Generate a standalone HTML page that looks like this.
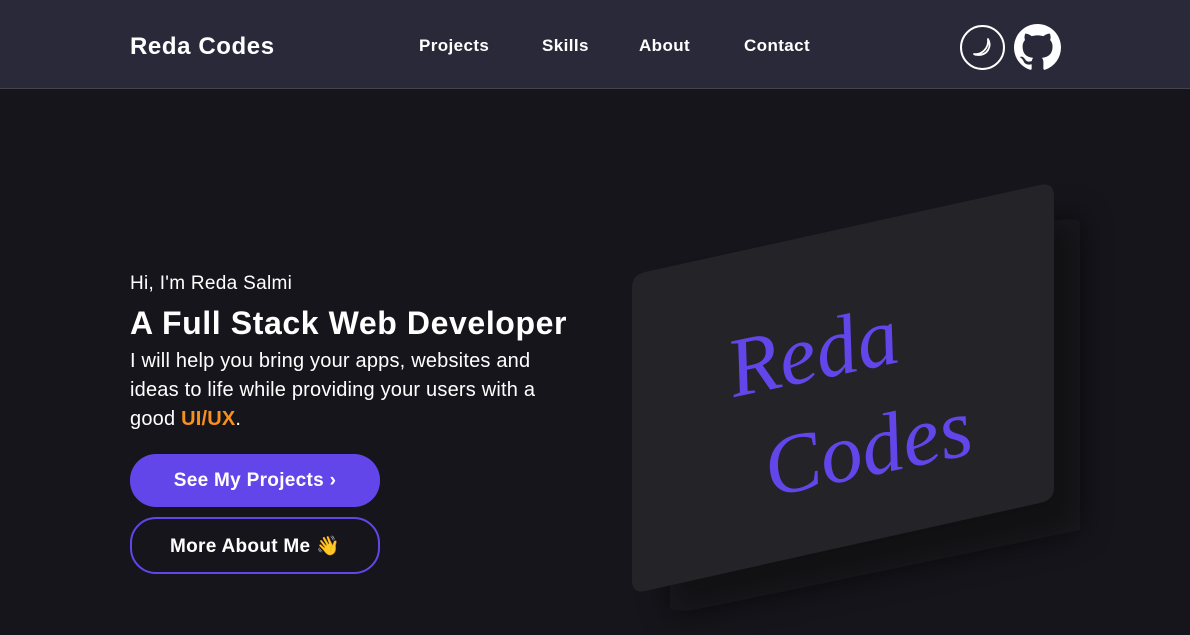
<!DOCTYPE html>
<html><head><style>
*{margin:0;padding:0;box-sizing:border-box}
body{width:1190px;height:635px;overflow:hidden;background:#16151b;font-family:"Liberation Sans",sans-serif;color:#fff;position:relative}
header{position:absolute;left:0;top:0;width:1190px;height:89px;background:#2a2939;border-bottom:1px solid #44434f}
.logo{position:absolute;left:130px;top:33px;font-size:24px;font-weight:bold;letter-spacing:0.6px}
nav a{position:absolute;top:36px;font-size:17px;font-weight:bold;color:#fff;text-decoration:none;letter-spacing:0.4px}
.t{position:absolute;left:130px}
.btn{position:absolute;left:130px;width:250px;border-radius:26px;font-weight:bold;font-size:19px;display:flex;align-items:center;justify-content:center;letter-spacing:0.3px}
</style></head><body>
<header>
<div class="logo">Reda Codes</div>
<nav><a style="left:419px">Projects</a><a style="left:542px">Skills</a><a style="left:639px">About</a><a style="left:744px">Contact</a></nav>
<svg style="position:absolute;left:959px;top:24px" width="47" height="47" viewBox="0 0 47 47"><circle cx="23.5" cy="23.5" r="21.5" fill="none" stroke="#fff" stroke-width="2"/><path d="M29 15 C33 22 29 31 19 31 C16 31 15 30 15 30 C23 31 30 24 29 15Z" fill="none" stroke="#fff" stroke-width="1.8" stroke-linejoin="round"/></svg>
<svg style="position:absolute;left:1014px;top:24px" width="47" height="47" viewBox="0 0 16 16"><path fill="#fff" d="M8 0C3.58 0 0 3.58 0 8c0 3.54 2.29 6.53 5.47 7.590.4.07.55-.17.55-.38 0-.19-.01-.82-.01-1.49-2.01.37-2.53-.49-2.69-.94-.09-.23-.48-.94-.82-1.130-.28-.15-.68-.52-.01-.53.63-.01 1.08.58 1.230.82.72 1.21 1.87.87 2.33.66.07-.52.28-.87.51-1.07-1.78-.2-3.64-.89-3.64-3.95 0-.87.31-1.59.82-2.15-.08-.2-.36-1.02.08-2.12 0 0 .67-.21 2.2.82.64-.18 1.32-.27 2-.27.68 0 1.36.09 2 .27 1.53-1.04 2.2-.82 2.2-.82.44 1.1.16 1.92.08 2.12.51.56.82 1.27.82 2.15 0 3.07-1.87 3.75-3.65 3.95.29.25.54.73.54 1.48 0 1.07-.01 1.930-.01 2.2 0 .21.15.46.55.38A8.013 8.013 0 0016 8c0-4.42-3.58-8-8-8z"/></svg>
</header>
<div class="t" style="top:273px;font-size:19px;letter-spacing:0.3px">Hi, I'm Reda Salmi</div>
<div class="t" style="top:305px;font-size:32px;font-weight:bold;letter-spacing:0.6px">A Full Stack Web Developer</div>
<div class="t" style="top:347px;font-size:20px;line-height:29px;width:440px;letter-spacing:0.2px">I will help you bring your apps, websites and ideas to life while providing your users with a good <b style="color:#f7901e">UI/UX</b>.</div>
<div class="btn" style="top:454px;height:53px;background:#6346ea">See My Projects &#x203A;</div>
<div class="btn" style="top:517px;height:57px;border:2px solid #6346ea">More About Me 👋</div>
<svg style="position:absolute;left:600px;top:160px" width="520" height="475" viewBox="600 160 520 475">
<defs><filter id="f" filterUnits="userSpaceOnUse" x="580" y="140" width="560" height="520"><feGaussianBlur stdDeviation="16"/></filter></defs>
<polygon points="670,300 1080,215 1080,530 670,615" fill="#0e0e11" filter="url(#f)" opacity="0.6"/>
<path d="M645,272 L1040,185 Q1054,182 1054,196 L1054,488 Q1054,500 1040,503 L645,591 Q632,594 632,580 L632,288 Q632,275 645,272Z" fill="#232328"/>
<g fill="#6346ea" font-family="Liberation Serif,serif" font-style="italic" font-size="84" transform="rotate(-12 840 390)">
<text x="735" y="375">Reda</text><text x="750" y="480">Codes</text></g>
</svg>
</body></html>
